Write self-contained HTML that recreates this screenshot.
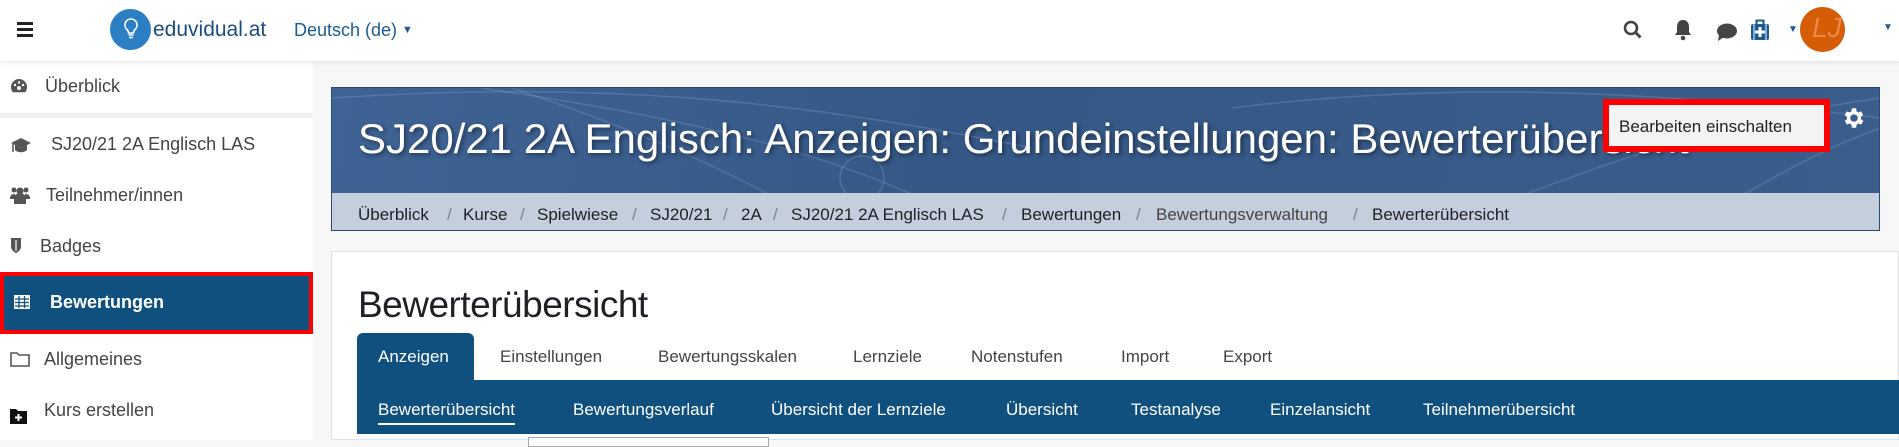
<!DOCTYPE html>
<html><head><meta charset="utf-8"><style>
*{margin:0;padding:0;box-sizing:border-box}
body{width:1899px;height:440px;overflow:hidden;background:#f7f7f7;font-family:"Liberation Sans",sans-serif;position:relative;color:#333}
.a{position:absolute;white-space:nowrap}
#nav{position:absolute;left:0;top:0;width:1899px;height:61px;background:#fff;box-shadow:0 2px 4px rgba(0,0,0,.08);z-index:2}
#side{position:absolute;left:0;top:61px;width:313px;height:379px;background:#fff}
.si{position:absolute;left:46px;font-size:18px;color:#444}
#banner{position:absolute;left:331px;top:87px;width:1549px;height:144px;background:linear-gradient(100deg,#3f6394 0%,#355886 40%,#3a5d8c 100%);border:1px solid #2b4b77;overflow:hidden}
#bc{position:absolute;left:0;top:105px;width:100%;height:39px;background:#c5cedd}
.bc{position:absolute;top:117px;font-size:17px;color:#1d2125}
.sl{color:#7a8594}
#card{position:absolute;left:331px;top:251px;width:1568px;height:189px;background:#fff;border:1px solid #e2e2e2}
.tab{position:absolute;top:347px;font-size:17px;color:#444}
.sub{position:absolute;top:400px;font-size:17px;color:#fff}
</style></head><body>
<div id="nav">
 <div class="a" style="left:17px;top:22px;width:16px;height:3px;background:#222;box-shadow:0 6px 0 #222,0 12px 0 #222"></div>
 <div class="a" style="left:110px;top:9px;width:41px;height:41px;border-radius:50%;background:#2d7fc4"></div>
 <svg class="a" style="left:122px;top:17px" width="18" height="24" viewBox="0 0 18 24"><path d="M9 2a6 6 0 0 0-4 10.5c1 1 1.5 2 1.5 3.5h5c0-1.5.5-2.5 1.5-3.5A6 6 0 0 0 9 2z" fill="none" stroke="#fff" stroke-width="1.6"/><path d="M6.5 18h5M7 20.5h4" stroke="#fff" stroke-width="1.5"/></svg>
 <div class="a" style="left:153px;top:18px;font-size:21px;color:#1a4d80">eduvidual.at</div>
 <div class="a" style="left:294px;top:20px;font-size:18px;color:#1a5b94">Deutsch (de) <span style="font-size:11px;position:relative;top:-3px">&#9660;</span></div>
 <svg class="a" style="left:1623px;top:20px" width="20" height="20" viewBox="0 0 20 20"><circle cx="8" cy="8" r="6" fill="none" stroke="#444" stroke-width="2.6"/><path d="M12.5 12.5l5 5" stroke="#444" stroke-width="3"/></svg>
 <svg class="a" style="left:1674px;top:19px" width="18" height="22" viewBox="0 0 18 22"><path d="M9 1c-4 0-6 3-6 7v5l-2 3h16l-2-3V8c0-4-2-7-6-7z" fill="#444"/><circle cx="9" cy="19" r="2.3" fill="#444"/></svg>
 <svg class="a" style="left:1716px;top:22px" width="22" height="20" viewBox="0 0 22 20"><ellipse cx="11" cy="9" rx="10" ry="7.5" fill="#444"/><path d="M3 13l-1 6 6-4z" fill="#444"/></svg>
 <svg class="a" style="left:1750px;top:19px" width="20" height="22" viewBox="0 0 20 22"><rect x="1" y="5" width="18" height="16" rx="2" fill="#1a5b94"/><rect x="6.5" y="1.5" width="7" height="5" fill="none" stroke="#1a5b94" stroke-width="2"/><path d="M10 8v10M5 13h10" stroke="#fff" stroke-width="3"/><path d="M4 5v16M16 5v16" stroke="#fff" stroke-width="1"/></svg>
 <div class="a" style="left:1788px;top:24px;font-size:10px;color:#1a5b94">&#9660;</div>
 <div class="a" style="left:1800px;top:7px;width:45px;height:45px;border-radius:50%;background:#d45d06"></div>
 <div class="a" style="left:1812px;top:12px;font-size:28px;font-style:italic;color:#e8894a">LJ</div>
 <div class="a" style="left:1883px;top:22px;font-size:10px;color:#1a5b94">&#9660;</div>
</div>
<div id="side">
 <div class="a" style="left:0;top:52px;width:313px;height:5px;background:#f2f2f2"></div>
 <svg class="a" style="left:10px;top:17px" width="18" height="16" viewBox="0 0 18 16"><path d="M9 1a8 8 0 0 0-8 8c0 2 .7 3.8 1.8 5.2h12.4A8 8 0 0 0 17 9a8 8 0 0 0-8-8z" fill="#555"/><circle cx="9" cy="10" r="2" fill="#fff"/><circle cx="5" cy="7" r="1.2" fill="#fff"/><circle cx="9" cy="4.5" r="1.2" fill="#fff"/><circle cx="13" cy="7" r="1.2" fill="#fff"/></svg>
 <div class="si" style="left:45px;top:15px">Überblick</div>
 <svg class="a" style="left:10px;top:76px" width="22" height="18" viewBox="0 0 22 18"><path d="M11 1L1 6l10 5 10-5z" fill="#555"/><path d="M5 8v5c3 3 9 3 12 0V8l-6 3z" fill="#555"/><path d="M3 7v8" stroke="#555" stroke-width="1.5"/></svg>
 <div class="si" style="left:51px;top:73px">SJ20/21 2A Englisch LAS</div>
 <svg class="a" style="left:10px;top:125px" width="20" height="18" viewBox="0 0 20 18"><circle cx="10" cy="5" r="3.5" fill="#555"/><circle cx="4" cy="4" r="2.5" fill="#555"/><circle cx="16" cy="4" r="2.5" fill="#555"/><path d="M4 18v-5a6 6 0 0 1 12 0v5z" fill="#555"/><path d="M0 12a4 4 0 0 1 4-4h1v5H0zM20 12a4 4 0 0 0-4-4h-1v5h5z" fill="#555"/></svg>
 <div class="si" style="left:46px;top:124px">Teilnehmer/innen</div>
 <svg class="a" style="left:10px;top:176px" width="12" height="17" viewBox="0 0 12 17"><path d="M1 1h10v8c0 4-3 6-5 7-2-1-5-3-5-7z" fill="#555"/><path d="M6 3v11" stroke="#fff" stroke-width="1.2"/></svg>
 <div class="si" style="left:40px;top:175px">Badges</div>
 <div class="a" style="left:0;top:211px;width:313px;height:62px;background:#10507e;border:4px solid #f00"></div>
 <svg class="a" style="left:14px;top:234px" width="16" height="14" viewBox="0 0 16 14"><rect x="0" y="0" width="16" height="14" fill="#fff"/><path d="M1 4h14M1 7.5h14M1 11h14M5 1v12M10.5 1v12" stroke="#10507e" stroke-width="1.3"/></svg>
 <div class="a" style="left:50px;top:231px;font-size:18px;font-weight:bold;color:#fff">Bewertungen</div>
 <svg class="a" style="left:10px;top:290px" width="20" height="16" viewBox="0 0 20 16"><path d="M1 2h6l2 2h10v11H1z" fill="none" stroke="#555" stroke-width="1.6"/></svg>
 <div class="si" style="left:44px;top:288px">Allgemeines</div>
 <svg class="a" style="left:10px;top:348px" width="17" height="15" viewBox="0 0 17 15"><path d="M0 0h6l2 2h9v13H0z" fill="#111"/><path d="M8.5 5v7M5 8.5h7" stroke="#fff" stroke-width="2"/></svg>
 <div class="si" style="left:44px;top:339px">Kurs erstellen</div>
</div>
<div id="banner">
 <svg class="a" style="left:0;top:0" width="1549" height="144" viewBox="0 0 1549 144">
  <g fill="none" stroke="#7d9cc4" stroke-opacity=".35" stroke-width="1.5">
   <path d="M0 10C300 -10 500 20 700 60"/><path d="M150 0C350 30 500 60 650 140"/><path d="M180 0C300 40 420 90 500 144"/>
   <path d="M900 20C1100 -5 1300 0 1549 30"/><path d="M1100 144C1250 80 1400 30 1549 10"/><path d="M1350 144C1420 100 1490 60 1549 40"/>
   <circle cx="530" cy="90" r="22"/><circle cx="400" cy="180" r="45"/>
  </g>
 </svg>
 <div id="bc"></div>
 <div class="a" style="left:26px;top:27px;font-size:42px;color:#fff;text-shadow:2px 2px 4px rgba(0,0,0,.45)">SJ20/21 2A Englisch: Anzeigen: Grundeinstellungen: Bewerterübersicht</div>
 <div class="bc" style="left:26px">Überblick</div><div class="bc sl" style="left:115px">/</div>
 <div class="bc" style="left:131px">Kurse</div><div class="bc sl" style="left:188px">/</div>
 <div class="bc" style="left:205px">Spielwiese</div><div class="bc sl" style="left:300px">/</div>
 <div class="bc" style="left:318px">SJ20/21</div><div class="bc sl" style="left:391px">/</div>
 <div class="bc" style="left:409px">2A</div><div class="bc sl" style="left:441px">/</div>
 <div class="bc" style="left:459px">SJ20/21 2A Englisch LAS</div><div class="bc sl" style="left:670px">/</div>
 <div class="bc" style="left:689px">Bewertungen</div><div class="bc sl" style="left:804px">/</div>
 <div class="bc" style="left:824px;color:#444">Bewertungsverwaltung</div><div class="bc sl" style="left:1021px">/</div>
 <div class="bc" style="left:1040px">Bewerterübersicht</div>
 <div class="a" style="left:1271px;top:11px;width:227px;height:53px;border:6px solid #f00;background:#f3f3f3">
  <div style="position:absolute;left:10px;top:12px;font-size:17px;color:#222">Bearbeiten einschalten</div>
 </div>
 <svg class="a" style="left:1509px;top:17px" width="26" height="26" viewBox="0 0 24 24"><path fill="#fff" d="M19.4 13a7.5 7.5 0 0 0 0-2l2.1-1.6-2-3.5-2.5 1a7 7 0 0 0-1.7-1L15 3h-4l-.4 2.9a7 7 0 0 0-1.7 1l-2.5-1-2 3.5L6.6 11a7.5 7.5 0 0 0 0 2l-2.1 1.6 2 3.5 2.5-1a7 7 0 0 0 1.7 1L11 21h4l.4-2.9a7 7 0 0 0 1.7-1l2.5 1 2-3.5zM13 15.5a3.5 3.5 0 1 1 0-7 3.5 3.5 0 0 1 0 7z" transform="translate(-1 0)"/></svg>
</div>
<div id="card"></div>
<div class="a" style="left:358px;top:284px;font-size:37px;color:#1d2125;letter-spacing:-0.5px">Bewerterübersicht</div>
<div class="a" style="left:357px;top:333px;width:117px;height:50px;background:#10507e;border-radius:6px 6px 0 0"></div>
<div class="tab" style="left:378px;color:#fff">Anzeigen</div>
<div class="tab" style="left:500px">Einstellungen</div>
<div class="tab" style="left:658px">Bewertungsskalen</div>
<div class="tab" style="left:853px">Lernziele</div>
<div class="tab" style="left:971px">Notenstufen</div>
<div class="tab" style="left:1121px">Import</div>
<div class="tab" style="left:1223px">Export</div>
<div class="a" style="left:357px;top:380px;width:1542px;height:54px;background:#10507e"></div>
<div class="sub" style="left:378px;border-bottom:2px solid #fff;padding-bottom:3px">Bewerterübersicht</div>
<div class="sub" style="left:573px">Bewertungsverlauf</div>
<div class="sub" style="left:771px">Übersicht der Lernziele</div>
<div class="sub" style="left:1006px">Übersicht</div>
<div class="sub" style="left:1131px">Testanalyse</div>
<div class="sub" style="left:1270px">Einzelansicht</div>
<div class="sub" style="left:1423px">Teilnehmerübersicht</div>
<div class="a" style="left:528px;top:437px;width:241px;height:10px;border:1px solid #aaa;background:#fff"></div>
</body></html>
